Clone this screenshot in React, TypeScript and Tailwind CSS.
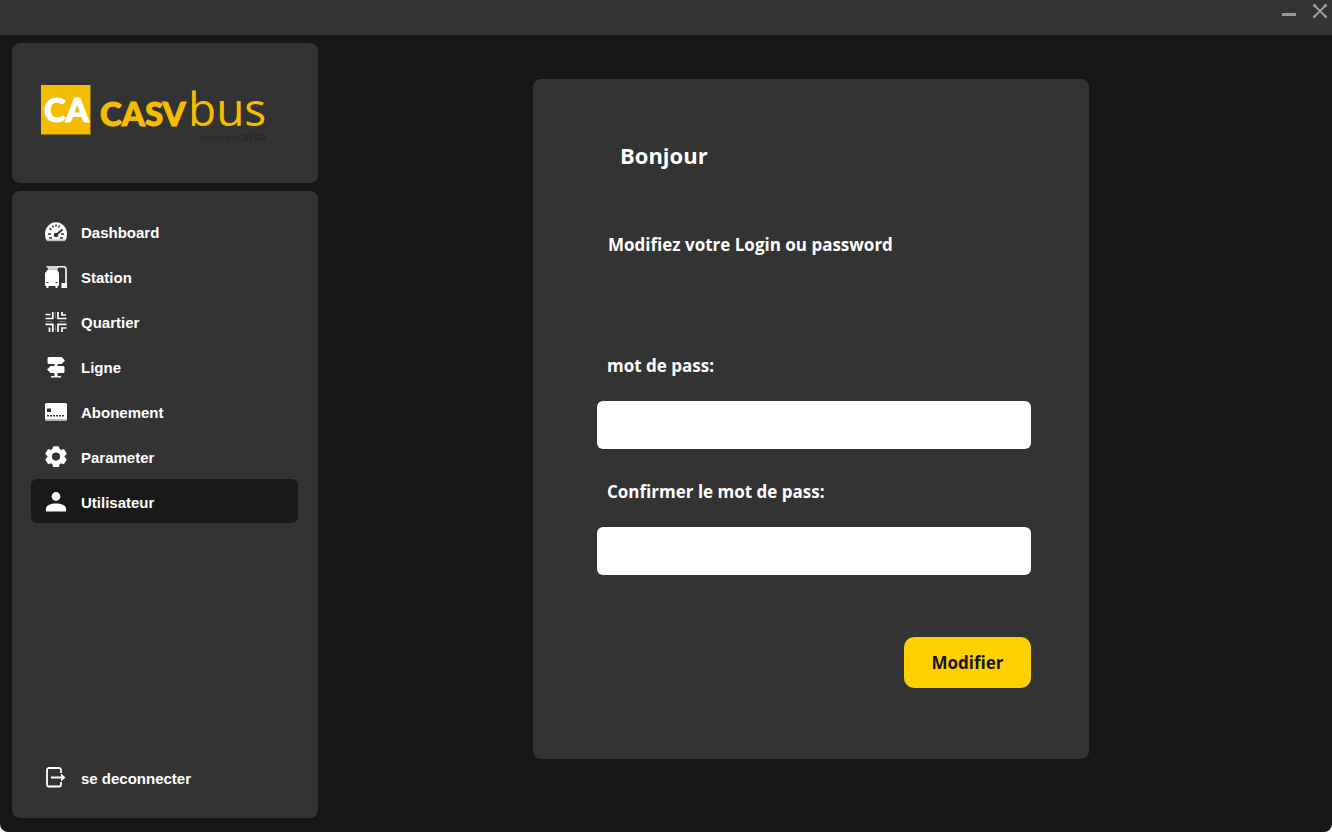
import type { ReactNode } from "react";

function Icon({ children }: { children: ReactNode }) {
  return (
    <svg viewBox="0 0 24 24" className="size-6 shrink-0 fill-white" aria-hidden="true">
      {children}
    </svg>
  );
}

const DashboardIcon = () => (
  <Icon>
    <path d="M3 22A11 11 0 0 1 1 15a11 11.700 0 0 1 22 0 11 11 0 0 1-2 7z" />
    <g stroke="#333333" strokeWidth="1.500" fill="none">
      <path d="M4 15h3M17 15h3M5.500 9.500l2 1.300M8.500 6.500l1 2M12 5.500v2.200M15.500 6.500l-1 2M5 19h3M16 19h3" />
      <path d="M12 16l6.500-5.500" strokeWidth="2" />
    </g>
    <circle cx="12" cy="16" r="2.300" fill="#333333" />
    <path d="M3 20.500h18v1.700H3z" fill="#bdbdbd" />
  </Icon>
);

const StationIcon = () => (
  <Icon>
    <path d="M2 2h13l-1.500 3.500h-9z" fill="#d6d6d6" />
    <path d="M4 5.500h9l2 3.500V21a1 1 0 0 1-1 1H2a1 1 0 0 1-1-1V9z" />
    <path d="M2.500 22h2v2h-2zM11.500 22h2v2h-2z" />
    <path d="M2.500 18.500h2M11.500 18.500h2" stroke="#333333" />
    <path d="M13 2.700h6.500a2.500 2.500 0 0 1 2.500 2.500V20" fill="none" stroke="#fff" strokeWidth="1.600" />
    <path d="M17.500 19H23v5h-5.500z" />
  </Icon>
);

const QuartierIcon = () => (
  <Icon>
    <g fill="none" stroke="#fff" strokeWidth="1.700">
      <path d="M1.500 9.500h7.300V3M1.500 5.500h5" />
      <path d="M14 3v6.500h8.500M18 3v3h4" />
      <path d="M1.500 15.300h7.300V23M5.500 18.500V23" />
      <path d="M22.500 15.300H14V23M22.500 19H18v4" />
    </g>
    <path d="M11.400 3v6M11.400 16v6M2 12.500h6M15 12.500h6" stroke="#777" strokeWidth="1" />
  </Icon>
);

const LigneIcon = () => (
  <Icon>
    <path d="M5 3h12.500l3.500 3.500-3.500 3.500H5a1.500 1.500 0 0 1-1.500-1.500v-4A1.500 1.500 0 0 1 5 3z" />
    <path d="M6.500 12H19a1.500 1.500 0 0 1 1.500 1.500v4A1.500 1.500 0 0 1 19 19H6.500L3 15.500z" />
    <path d="M10.500 9.500h3V13h-3zM10.500 18h3v4h-3zM7 22h10v1.500H7z" />
  </Icon>
);

const AbonementIcon = () => (
  <Icon>
    <rect x="1" y="4" width="22" height="17.500" rx="1.500" />
    <path d="M1.500 20h21v1.800h-21z" fill="#b5b5b5" />
    <rect x="3" y="9.500" width="4" height="3.500" fill="#333333" />
    <path d="M3 16.700h17" stroke="#333333" strokeWidth="1.500" strokeDasharray="2 1" />
  </Icon>
);

const ParameterIcon = () => (
  <Icon>
    <path
      fillRule="evenodd"
      stroke="#fff"
      strokeWidth="1.600"
      strokeLinejoin="round"
      d="M9.800 3h4.400l.8 2.800 1.800 1 2.800-.8 2.200 3.700-2 2.100v1.600l2 2.100-2.200 3.700-2.800-.7-1.800 1-.8 2.800H9.800L9 19.500l-1.800-1-2.800.7-2.200-3.700 2-2.100v-1.600l-2-2.100L4.400 6l2.800.8 1.800-1zM12 7.700a4.900 4.900 0 1 0 0 9.800A4.900 4.900 0 0 0 12 7.700z"
    />
  </Icon>
);

const UtilisateurIcon = () => (
  <Icon>
    <circle cx="12" cy="7.500" r="4.400" />
    <path d="M2 22.500v-3c0-3.500 5-5 10-5s10 1.500 10 5v3z" />
  </Icon>
);

const LogoutIcon = () => (
  <Icon>
    <g fill="none" stroke="#fff" strokeWidth="1.800">
      <path d="M17 8V5a2 2 0 0 0-2-2H5a2 2 0 0 0-2 2v14.500a2 2 0 0 0 2 2h10a2 2 0 0 0 2-2V17" />
      <path d="M7 12.500h13" />
    </g>
    <path d="M17 8.500l4.500 4-4.500 4z" />
  </Icon>
);

const items = [
  { label: "Dashboard", icon: <DashboardIcon /> },
  { label: "Station", icon: <StationIcon /> },
  { label: "Quartier", icon: <QuartierIcon /> },
  { label: "Ligne", icon: <LigneIcon /> },
  { label: "Abonement", icon: <AbonementIcon /> },
  { label: "Parameter", icon: <ParameterIcon /> },
  { label: "Utilisateur", icon: <UtilisateurIcon />, active: true },
];

function NavItem({ label, icon, active = false }: { label: string; icon: ReactNode; active?: boolean }) {
  return (
    <a
      href="#"
      aria-current={active ? "page" : undefined}
      className={
        active
          ? "flex h-11 items-center gap-[13px] rounded-md bg-[#191919] pl-[13px]"
          : "flex h-11 items-center gap-[13px] rounded-md pl-[13px]"
      }
    >
      {icon}
      <span className="pt-1">{label}</span>
    </a>
  );
}

function Logo() {
  return (
    <svg viewBox="0 0 228 60" className="h-[60px] w-[228px] overflow-visible" role="img" aria-label="Casabus">
      <rect width="50" height="50" fill="#8a6d0c" />
      <rect width="49" height="49" fill="#f6bd00" />
      <g fontFamily="Lato, sans-serif" fontWeight="900" strokeWidth="1">
        <text x="3" y="37" fontSize="33" fill="#fff" stroke="#fff">CA</text>
        <text x="59" y="41" fontSize="33" fill="#f6bd00" stroke="#f6bd00">CASV</text>
      </g>
      <text x="147" y="41" fontFamily="'Open Sans', sans-serif" fontWeight="400" fontSize="46" fill="#f6bd00">
        bus
      </text>
      <g fontFamily="'Open Sans', sans-serif" fill="#28282e">
        <text x="156" y="56" fontSize="9" fontWeight="400">Opéré par</text>
        <text x="200" y="56" fontSize="12" fontWeight="800">alsa</text>
      </g>
    </svg>
  );
}

function Field({ id, label }: { id: string; label: string }) {
  return (
    <div className="flex flex-col gap-[23px]">
      <label htmlFor={id} className="pl-2.5 leading-6">
        {label}
      </label>
      <input
        id={id}
        type="password"
        className="h-12 w-full rounded-md bg-white px-3 text-black outline-none"
      />
    </div>
  );
}

export default function App() {
  return (
    <div className="bg-white">
      <div className="flex min-h-screen flex-col overflow-hidden rounded-b-lg bg-[#161616] font-bold text-white">
        <header className="flex h-[35px] items-start justify-end gap-4 bg-[#333333] pt-[3px] pr-1">
          <button type="button" aria-label="Réduire" className="size-4">
            <svg viewBox="0 0 16 16" className="size-4">
              <path d="M2 11.500h14" stroke="#999" strokeWidth="3" />
            </svg>
          </button>
          <button type="button" aria-label="Fermer" className="size-4">
            <svg viewBox="0 0 16 16" className="size-4" fill="none" stroke="#a0a0a0" strokeWidth="1.800">
              <path d="M2 2l12 12M14 2L2 14" />
              <path d="M1.500 1.500l2 2M14.500 1.500l-2 2M1.500 14.500l2-2M14.500 14.500l-2-2" strokeWidth="2.500" />
            </svg>
          </button>
        </header>

        <div className="flex flex-1">
          <aside className="flex w-[318px] shrink-0 flex-col gap-2 pt-2 pb-3.5 pl-3 font-['Liberation_Sans',sans-serif] text-[15px]">
            <div className="h-[140px] rounded-lg bg-[#333333] pt-[42px] pl-[29px]">
              <Logo />
            </div>
            <nav className="flex flex-1 flex-col gap-px rounded-lg bg-[#333333] pt-[18px] pr-5 pb-[19px] pl-[19px]">
              {items.map((item) => (
                <NavItem key={item.label} {...item} />
              ))}
              <div className="mt-auto">
                <NavItem label="se deconnecter" icon={<LogoutIcon />} />
              </div>
            </nav>
          </aside>

          <main className="flex flex-1 items-start justify-center pt-11 pr-7 font-['Open_Sans',sans-serif] text-[17px]">
            <form
              className="flex w-full max-w-[556px] flex-col rounded-lg bg-[#333333] pt-[60px] pr-[58px] pb-[71px] pl-16"
              onSubmit={(e) => e.preventDefault()}
            >
              <h1 className="pl-[23px] text-[22px] leading-8">Bonjour</h1>
              <p className="mt-[62px] pl-[11px] leading-6">Modifiez votre Login ou password</p>
              <div className="mt-[97px] flex flex-col gap-[31px]">
                <Field id="password" label="mot de pass:" />
                <Field id="confirm" label="Confirmer le mot de pass:" />
              </div>
              <button
                type="submit"
                className="mt-[62px] h-[51px] w-[127px] self-end rounded-[10px] bg-[#ffd000] text-[#161616]"
              >
                Modifier
              </button>
            </form>
          </main>
        </div>
      </div>
    </div>
  );
}
